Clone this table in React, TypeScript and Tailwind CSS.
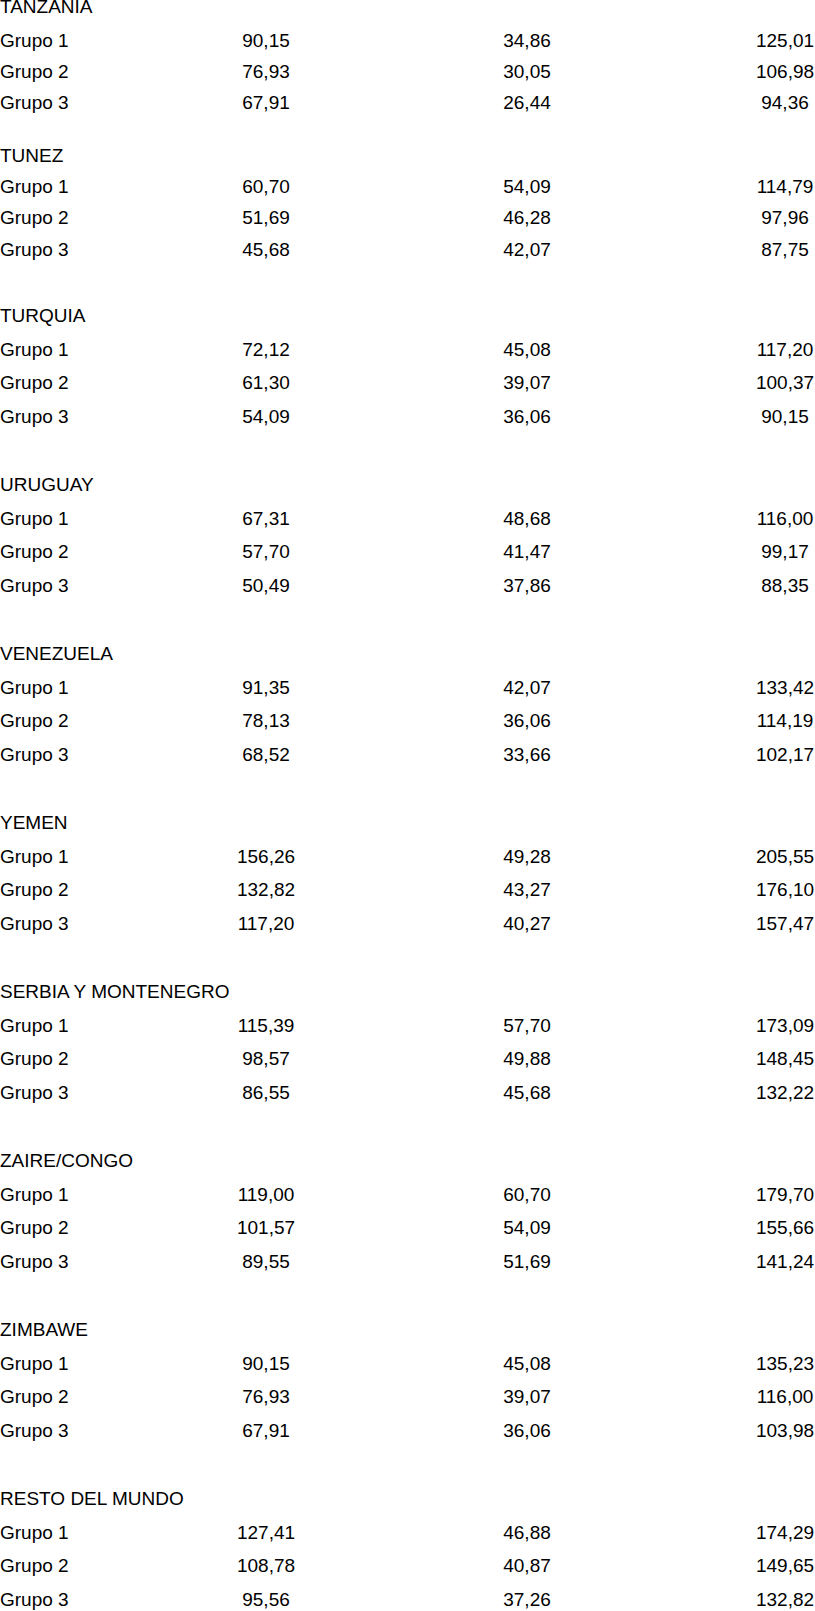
import React from 'react';

type Row = [string, string, string, string];

type Section = {
  name: string;
  rows: Row[];
};

const sections: Section[] = [
  {
    name: 'TANZANIA',
    rows: [
      ['Grupo 1', '90,15', '34,86', '125,01'],
      ['Grupo 2', '76,93', '30,05', '106,98'],
      ['Grupo 3', '67,91', '26,44', '94,36'],
    ],
  },
  {
    name: 'TUNEZ',
    rows: [
      ['Grupo 1', '60,70', '54,09', '114,79'],
      ['Grupo 2', '51,69', '46,28', '97,96'],
      ['Grupo 3', '45,68', '42,07', '87,75'],
    ],
  },
  {
    name: 'TURQUIA',
    rows: [
      ['Grupo 1', '72,12', '45,08', '117,20'],
      ['Grupo 2', '61,30', '39,07', '100,37'],
      ['Grupo 3', '54,09', '36,06', '90,15'],
    ],
  },
  {
    name: 'URUGUAY',
    rows: [
      ['Grupo 1', '67,31', '48,68', '116,00'],
      ['Grupo 2', '57,70', '41,47', '99,17'],
      ['Grupo 3', '50,49', '37,86', '88,35'],
    ],
  },
  {
    name: 'VENEZUELA',
    rows: [
      ['Grupo 1', '91,35', '42,07', '133,42'],
      ['Grupo 2', '78,13', '36,06', '114,19'],
      ['Grupo 3', '68,52', '33,66', '102,17'],
    ],
  },
  {
    name: 'YEMEN',
    rows: [
      ['Grupo 1', '156,26', '49,28', '205,55'],
      ['Grupo 2', '132,82', '43,27', '176,10'],
      ['Grupo 3', '117,20', '40,27', '157,47'],
    ],
  },
  {
    name: 'SERBIA Y MONTENEGRO',
    rows: [
      ['Grupo 1', '115,39', '57,70', '173,09'],
      ['Grupo 2', '98,57', '49,88', '148,45'],
      ['Grupo 3', '86,55', '45,68', '132,22'],
    ],
  },
  {
    name: 'ZAIRE/CONGO',
    rows: [
      ['Grupo 1', '119,00', '60,70', '179,70'],
      ['Grupo 2', '101,57', '54,09', '155,66'],
      ['Grupo 3', '89,55', '51,69', '141,24'],
    ],
  },
  {
    name: 'ZIMBAWE',
    rows: [
      ['Grupo 1', '90,15', '45,08', '135,23'],
      ['Grupo 2', '76,93', '39,07', '116,00'],
      ['Grupo 3', '67,91', '36,06', '103,98'],
    ],
  },
  {
    name: 'RESTO DEL MUNDO',
    rows: [
      ['Grupo 1', '127,41', '46,88', '174,29'],
      ['Grupo 2', '108,78', '40,87', '149,65'],
      ['Grupo 3', '95,56', '37,26', '132,82'],
    ],
  },
];

// the first two blocks of the sheet have slightly shorter rows
const DataRow = ({ row, tall }: { row: Row; tall: boolean }) => (
  <div className={`flex ${tall ? 'h-[33.8px] leading-[33.8px]' : 'h-[31.3px] leading-[31.3px]'}`}>
    <div className="w-[137px] whitespace-nowrap">{row[0]}</div>
    <div className="w-[258px] text-center">{row[1]}</div>
    <div className="w-[264px] text-center">{row[2]}</div>
    <div className="w-[96px]" />
    <div className="w-[60px] text-center whitespace-nowrap">{row[3]}</div>
  </div>
);

export default function App() {
  return (
    <div className="w-[815px] h-[1611px] overflow-hidden bg-white text-black text-[19px] font-['Liberation_Sans',Arial,sans-serif]">
      <div className="-mt-[8.8px]">
        {sections.map((section, i) => {
          const tall = i >= 2;
          return (
            <div key={section.name}>
              {i === 1 && <div className="h-[21.1px]" />}
              {tall && <div className="h-[33.8px]" />}
              <div
                className={
                  i === 0
                    ? 'h-[33.7px] leading-[31.3px]'
                    : tall
                      ? 'h-[33.8px] leading-[33.8px]'
                      : 'h-[31.3px] leading-[31.3px]'
                }
              >
                {section.name}
              </div>
              {section.rows.map((row) => (
                <DataRow key={row[0]} row={row} tall={tall} />
              ))}
            </div>
          );
        })}
      </div>
    </div>
  );
}
